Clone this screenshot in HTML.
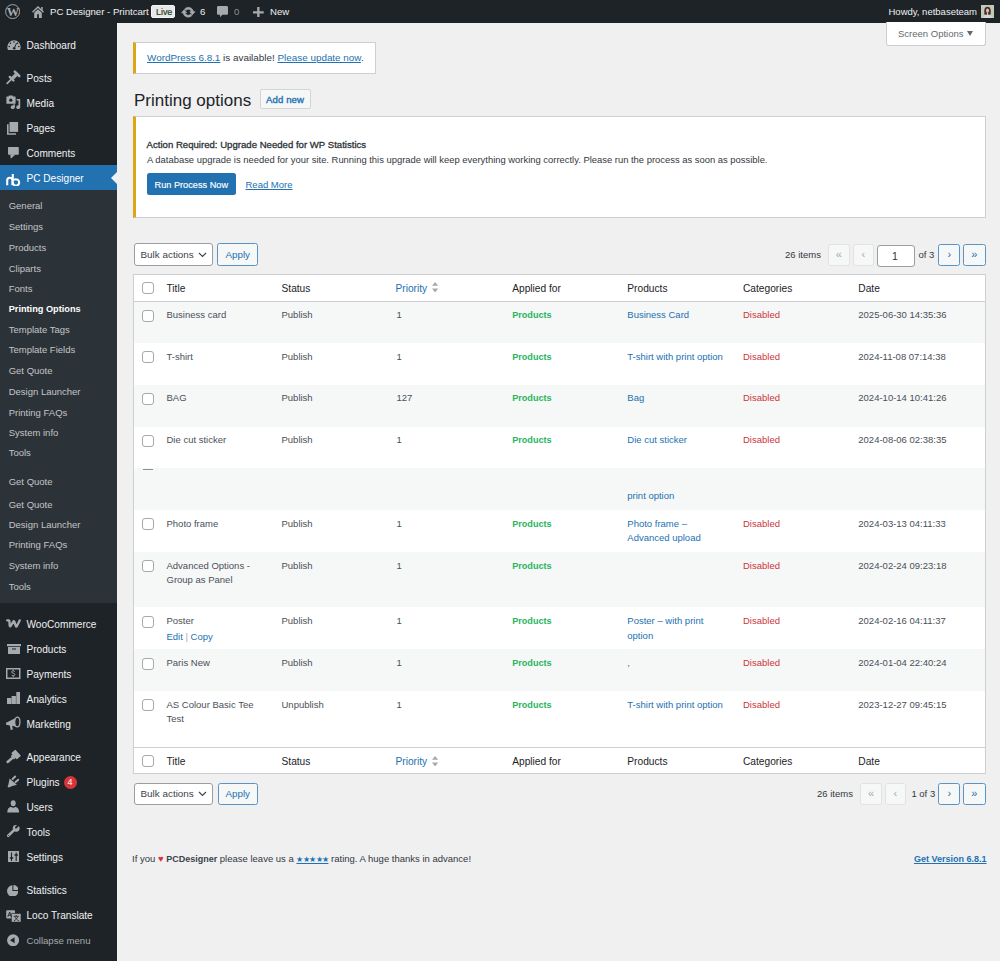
<!DOCTYPE html>
<html><head><meta charset="utf-8">
<style>
*{margin:0;padding:0;box-sizing:border-box}
html,body{width:1000px;height:961px;overflow:hidden;background:#f0f0f1;font-family:"Liberation Sans",sans-serif;}
#root{position:relative;width:1000px;height:961px;overflow:hidden}
.a{position:absolute}
.t{position:absolute;white-space:nowrap;line-height:14px;font-size:9.5px;color:#32383e}
#bar{left:0;top:0;width:1000px;height:23px;background:#1d2327}
#bar .t{color:#f0f0f1;font-size:9.6px}
#side{left:0;top:23px;width:117px;height:938px;background:#1d2327}
.m{position:absolute;margin-top:1px;left:26.5px;white-space:nowrap;line-height:14px;font-size:10.1px;color:#f0f0f1}
.s{position:absolute;left:8.7px;white-space:nowrap;line-height:14px;font-size:9.5px;color:#c3c4c7}
.ic{position:absolute;left:5px;width:16px;height:16px}
.link{color:#2271b1}
.tb .t:not(.lk):not(.g):not(.r){color:#4a5057}
.hd{color:#1d2327;font-size:10.2px}
.g{color:#27b55e;font-weight:bold;font-size:9.1px}
.r{color:#cc3538}
.lk{color:#2271b1}
.cb{position:absolute;left:142px;width:12px;height:12px;border:1px solid #a5a8ac;border-radius:3px;background:#fff}
.btn{position:absolute;border:1px solid #5b93c4;border-radius:2.5px;background:#f6f7f7;color:#2271b1}
.pg{position:absolute;height:22px;width:21.5px;border-radius:2.5px;font-size:11px;line-height:18.5px;text-align:center}
.pg.dis{border:1px solid #e2e2e4;background:#f6f7f7;color:#a7aaad}
.pg.en{border:1px solid #5b93c4;background:#f6f7f7;color:#2271b1}
</style></head>
<body><div id="root">

<!-- admin bar -->
<div id="bar" class="a">
  <svg class="a" style="left:4.8px;top:4.1px" width="15.2" height="15.2" viewBox="0 0 20 20"><circle cx="10" cy="10" r="9.2" fill="none" stroke="#a7aaad" stroke-width="1.3"/><text x="10" y="16.2" font-family="Liberation Serif" font-weight="bold" font-size="16.5" fill="#a7aaad" text-anchor="middle" letter-spacing="-1.2">W</text></svg>
  <svg class="a" style="left:32px;top:5.5px" width="12" height="12" viewBox="0 0 12 12"><path d="M.5 6.2L6 1l5.5 5.2" fill="none" stroke="#a7aaad" stroke-width="1.4"/><rect x="9.2" y="1" width="1.5" height="3.5" fill="#a7aaad"/><path d="M2.2 6.8L6 3.2l3.8 3.6V12H2.2z" fill="#a7aaad"/><rect x="5.1" y="8.2" width="1.8" height="3.8" fill="#1d2327"/></svg>
  <div class="t" style="left:50px;top:4.5px">PC Designer - Printcart</div>
  <div class="a" style="left:151.2px;top:5px;width:24.3px;height:13px;background:#e8e8e8;border:1px solid #f4f4f4;border-radius:2px"></div>
  <div class="t" style="left:156px;top:4.7px;color:#1f3d1f;font-size:8.9px;-webkit-text-stroke:.2px #1f3d1f">Live</div>
  <svg class="a" style="left:181px;top:4.5px" width="14.5" height="14.5" viewBox="0 0 20 20"><path d="M10.2 3.28c3.53 0 6.43 2.61 6.92 6h2.08l-3.5 4-3.5-4h2.32c-.45-1.97-2.21-3.45-4.32-3.45-1.45 0-2.730.71-3.54 1.78L4.950 5.66C6.23 4.2 8.11 3.28 10.2 3.28zm-.4 13.44c-3.52 0-6.43-2.61-6.92-6H.8l3.5-4c1.17 1.33 2.33 2.67 3.5 4H5.48c.45 1.97 2.21 3.45 4.32 3.45 1.45 0 2.73-.71 3.54-1.78l1.71 1.95c-1.28 1.46-3.15 2.38-5.25 2.38z" fill="#a7aaad" stroke="#a7aaad" stroke-width="1"/></svg>
  <div class="t" style="left:200px;top:4.5px">6</div>
  <svg class="a" style="left:217.3px;top:6.3px" width="11" height="11.5" viewBox="0 0 11 11.5"><path d="M1.3 0h8.4C10.4 0 11 .6 11 1.3v6.2c0 .7-.6 1.3-1.3 1.3H5.3L3 11.3V8.8H1.3C.6 8.8 0 8.2 0 7.5V1.3C0 .6.6 0 1.3 0z" fill="#a7aaad"/></svg>
  <div class="t" style="left:234px;top:4.5px;color:#8c8f94 !important">0</div>
  <svg class="a" style="left:253.3px;top:6.6px" width="10.7" height="10.7" viewBox="0 0 20 20"><path d="M7.8 0h4.4v7.8H20v4.4h-7.8V20H7.8v-7.8H0V7.8h7.8z" fill="#a7aaad"/></svg>
  <div class="t" style="left:270px;top:4.5px">New</div>
  <div class="t" style="left:888.5px;top:4.5px;font-size:9.5px">Howdy, netbaseteam</div>
  <svg class="a" style="left:981px;top:5px" width="13" height="13" viewBox="0 0 13 13"><rect width="13" height="13" fill="#c3c8b4"/><path d="M2 13c.5-2.5 2-3.5 4.5-3.5S10.5 10.5 11 13z" fill="#d4d6d8"/><path d="M6.5 1.8c-2 0-3.2 1.5-3.2 3.6v3.8c.8.6 1.6.7 2.4.5l.5-2.5h.6l.5 2.5c.8.2 1.6.1 2.4-.5V5.4c0-2.1-1.2-3.6-3.2-3.6z" fill="#4a2c30"/><ellipse cx="6.5" cy="5.6" rx="1.5" ry="2.2" fill="#d9c4b6"/></svg>
</div>

<!-- sidebar -->
<div id="side" class="a"></div>
<div class="a" style="left:0;top:165px;width:117px;height:25px;background:#2271b1"></div>
<div class="a" style="left:0;top:190px;width:117px;height:413px;background:#2c3338"></div>

<div class="m" style="top:37.5px">Dashboard</div>
<div class="m" style="top:70.5px">Posts</div>
<div class="m" style="top:95.5px">Media</div>
<div class="m" style="top:121px">Pages</div>
<div class="m" style="top:146px">Comments</div>
<div class="m" style="top:171px;color:#fff">PC Designer</div>

<div class="s" style="top:199px">General</div>
<div class="s" style="top:220px">Settings</div>
<div class="s" style="top:240.5px">Products</div>
<div class="s" style="top:261.5px">Cliparts</div>
<div class="s" style="top:281.5px">Fonts</div>
<div class="s" style="top:302px;color:#fff;font-size:9.2px;font-weight:bold">Printing Options</div>
<div class="s" style="top:323px">Template Tags</div>
<div class="s" style="top:343px">Template Fields</div>
<div class="s" style="top:364px">Get Quote</div>
<div class="s" style="top:384.5px">Design Launcher</div>
<div class="s" style="top:405.5px">Printing FAQs</div>
<div class="s" style="top:426px">System info</div>
<div class="s" style="top:446px">Tools</div>
<div class="s" style="top:475px">Get Quote</div>
<div class="s" style="top:497.5px">Get Quote</div>
<div class="s" style="top:518px">Design Launcher</div>
<div class="s" style="top:538px">Printing FAQs</div>
<div class="s" style="top:559px">System info</div>
<div class="s" style="top:580px">Tools</div>

<div class="m" style="top:616.5px">WooCommerce</div>
<div class="m" style="top:641.5px">Products</div>
<div class="m" style="top:666.5px">Payments</div>
<div class="m" style="top:691.5px">Analytics</div>
<div class="m" style="top:716.5px">Marketing</div>
<div class="m" style="top:750px">Appearance</div>
<div class="m" style="top:775px">Plugins</div>
<div class="a" style="left:63.5px;top:775.5px;width:13px;height:13px;border-radius:50%;background:#d63638;color:#fff;font-size:9px;line-height:13px;text-align:center">4</div>
<div class="m" style="top:800px">Users</div>
<div class="m" style="top:825px">Tools</div>
<div class="m" style="top:850px">Settings</div>
<div class="m" style="top:883px">Statistics</div>
<div class="m" style="top:908px">Loco Translate</div>
<div class="m" style="top:933px;color:#a7aaad;font-size:9.6px">Collapse menu</div>


<!-- sidebar icons -->
<svg class="a" style="left:6.5px;top:39.5px" width="14" height="10" viewBox="0 0 14 10"><path d="M7 0.3A6.7 6.7 0 0 0 0.3 7c0 1.1.3 2.1.7 3h12c.4-.9.7-1.9.7-3A6.7 6.7 0 0 0 7 .3z" fill="#a7aaad"/><circle cx="7" cy="2" r=".8" fill="#1d2327"/><circle cx="3.5" cy="3.3" r=".8" fill="#1d2327"/><circle cx="10.5" cy="3.3" r=".8" fill="#1d2327"/><circle cx="2.2" cy="6.5" r=".8" fill="#1d2327"/><circle cx="11.8" cy="6.5" r=".8" fill="#1d2327"/><path d="M9.5 3.2L7.6 7.6" stroke="#1d2327" stroke-width="1"/><circle cx="7.2" cy="8.2" r="1.3" fill="#1d2327"/></svg>
<svg class="a" style="left:4px;top:68px" width="20" height="18" viewBox="0 0 20 18"><g stroke="#a7aaad" fill="none"><path d="M10.8 3.6l4.4 4.4" stroke-width="2.6" stroke-linecap="round"/><path d="M12.6 6.2l-4 4" stroke-width="3.4"/><path d="M5.8 8.9l3.6 3.6" stroke-width="2.4" stroke-linecap="round"/><path d="M7.4 11.2L3.2 15.4" stroke-width="1.7" stroke-linecap="round"/></g></svg>
<svg class="a" style="left:4px;top:94px" width="20" height="18" viewBox="0 0 20 18"><rect x="2.4" y="2.4" width="9.2" height="7.4" rx=".4" fill="#a7aaad"/><rect x="4.6" y="1.6" width="4.4" height="1.4" rx=".5" fill="#a7aaad"/><circle cx="6.8" cy="6.2" r="1.6" fill="#1d2327"/><path d="M12.6 5h3.6v8.2h-1.7V6.6h-1.9z" fill="#a7aaad"/><circle cx="8.7" cy="13.2" r="1.9" fill="#a7aaad"/><circle cx="14.2" cy="13.2" r="1.9" fill="#a7aaad"/><rect x="9.4" y="10.3" width="1.5" height="3" fill="#a7aaad"/></svg>
<svg class="a" style="left:7.2px;top:121.8px" width="12" height="13" viewBox="0 0 12 13"><path d="M2.5 0h8.6v9.9H2.5z" fill="#a7aaad"/><path d="M1.6 2.2v9h7.4v1.6H0V2.2z" fill="#a7aaad"/></svg>
<svg class="a" style="left:7.7px;top:147px" width="11" height="12" viewBox="0 0 11 12"><rect x="0" y="0" width="10.8" height="7.8" rx=".7" fill="#a7aaad"/><path d="M2.2 7.4l.6 4.4 4.6-4.4z" fill="#a7aaad"/></svg>
<svg class="a" style="left:5.8px;top:173.5px" width="15" height="12" viewBox="0 0 15 12"><path d="M1.2 11.3V6.3a2.6 2.6 0 0 1 5.2 0v5M6.8 0v8.5a3.2 3.2 0 1 0 3.2-3.2 3 3 0 0 0-2 .7" fill="none" stroke="#fff" stroke-width="2.1"/></svg>
<svg class="a" style="left:111px;top:172px" width="6" height="12" viewBox="0 0 6 12"><path d="M6 0L0 6l6 6z" fill="#f0f0f1"/></svg>

<svg class="a" style="left:6px;top:619px" width="15" height="9" viewBox="0 0 15 9"><path d="M1.2 1.4h1.6c.5 0 .6.3.6.8l.3 4.4c.1.9.6 1.1 1 .4l2.6-4.4c.4-.7.8-.6 1 .1l1.5 4.3c.3.8.8.8 1.1 0l2.8-5.6" fill="none" stroke="#a7aaad" stroke-width="2.3" stroke-linejoin="round" stroke-linecap="round"/></svg>
<svg class="a" style="left:6.5px;top:644px" width="14" height="10" viewBox="0 0 14 10"><path d="M0 0h14v2.3H0zM1 3h12v7H1z" fill="#a7aaad"/><path d="M5 4.5h4v1H5z" fill="#1d2327"/></svg>
<svg class="a" style="left:6px;top:668px" width="14.5" height="11" viewBox="0 0 14.5 11"><rect x=".75" y=".75" width="13" height="9.5" fill="none" stroke="#a7aaad" stroke-width="1.5"/><path d="M8.8 3.6c-.3-.5-.9-.8-1.6-.8-.9 0-1.6.5-1.6 1.2 0 1.5 3.3.9 3.3 2.5 0 .7-.7 1.3-1.7 1.3-.8 0-1.4-.3-1.7-.9M7.2 1.9v.9M7.2 7.8v1" fill="none" stroke="#a7aaad" stroke-width="1"/></svg>
<svg class="a" style="left:6.5px;top:692px" width="13.6" height="12" viewBox="0 0 13.6 12"><path d="M0 6h4.3v6H0zM4.6 4h4.3v8H4.6zM9.3 0h4.3v12H9.3z" fill="#a7aaad"/></svg>
<svg class="a" style="left:6px;top:716px" width="15" height="15" viewBox="0 0 15 15"><path d="M1.2 6.3L11 1.2v9.6L1.2 8.9A1.3 1.3 0 0 1 1.2 6.3z" fill="#a7aaad"/><path d="M3.6 8.6l1.1 5.4 2.2-.4-.9-4.6" fill="#a7aaad"/><ellipse cx="11.3" cy="6" rx="2.6" ry="4.9" fill="#1d2327" stroke="#a7aaad" stroke-width="1.3"/></svg>

<svg class="a" style="left:3px;top:748px" width="20" height="17" viewBox="0 0 20 17"><g transform="rotate(-42 12.5 7)"><rect x="10.5" y="2.8" width="5.5" height="8.4" rx=".6" fill="#a7aaad"/><rect x="8.3" y="4.6" width="2.6" height="4.8" fill="#a7aaad"/></g><path d="M9 10.2L4.6 14" stroke="#a7aaad" stroke-width="2.5" stroke-linecap="round"/></svg>
<svg class="a" style="left:3px;top:772px" width="20" height="20" viewBox="0 0 20 20"><path d="M6.6 6.6L13.9 12.7 8.6 14.3 6 15.6 4.6 15 5.5 12z" fill="#a7aaad"/><path d="M9.6 6.9l2.6-2.3M12.6 10l2.6-2.3" stroke="#a7aaad" stroke-width="2" stroke-linecap="round"/></svg>
<svg class="a" style="left:3px;top:798px" width="20" height="16" viewBox="0 0 20 16"><ellipse cx="10.2" cy="5.3" rx="2.5" ry="3" fill="#a7aaad"/><path d="M4.3 14.6C4.3 11 5.6 9.4 8 8.8c.7.6 1.4.9 2.2.9s1.5-.3 2.2-.9c2.4.6 3.7 2.2 3.7 5.8z" fill="#a7aaad"/></svg>
<svg class="a" style="left:3px;top:822px" width="20" height="18" viewBox="0 0 20 18"><path d="M5.2 13.8L11.6 7.6" stroke="#a7aaad" stroke-width="2.6" stroke-linecap="round"/><circle cx="13.2" cy="6.3" r="3.4" fill="#a7aaad"/><path d="M13 5.5l2.8-2.7" stroke="#1d2327" stroke-width="2" stroke-linecap="round"/><circle cx="5.6" cy="13.4" r=".5" fill="#1d2327"/></svg>
<svg class="a" style="left:7.8px;top:850.6px" width="11.7" height="11.5" viewBox="0 0 11.7 11.5"><rect width="11.7" height="11.5" fill="#a7aaad"/><path d="M3.5 1.5v8.5M8.2 1.5v8.5" stroke="#1d2327" stroke-width="1.1"/><path d="M1.8 7h3.4M6.5 4h3.4" stroke="#1d2327" stroke-width="1.3"/></svg>

<svg class="a" style="left:6.8px;top:884.8px" width="11.7" height="11.5" viewBox="0 0 11.7 11.5"><path d="M5.4.3v5.6h6a5.7 5.7 0 1 1-6-5.6z" fill="#a7aaad"/><path d="M6.4 0A5.3 5.3 0 0 1 11.7 4.9H6.4z" fill="#a7aaad"/></svg>
<svg class="a" style="left:5.5px;top:909.6px" width="15.5" height="12.5" viewBox="0 0 15.5 12.5"><rect x=".2" y=".2" width="8.8" height="8.4" rx=".8" fill="#a7aaad"/><rect x="5.3" y="3.4" width="9.8" height="8.8" rx=".8" fill="#a7aaad" stroke="#1d2327" stroke-width=".7"/><path d="M1.8 6.8l1.9-4.8 1.6 4.8M2.4 5.2h2.4" stroke="#1d2327" stroke-width=".9" fill="none"/><path d="M7.6 6.3h5.2M10.2 5.2v1.1M8 10.8c1.8-1 3.2-2.4 3.7-4.3M9.2 7.2c.7 1.6 2 2.9 3.7 3.6" stroke="#1d2327" stroke-width=".85" fill="none"/></svg>
<svg class="a" style="left:7.1px;top:933.8px" width="12.2" height="12.5" viewBox="0 0 12.2 12.5"><circle cx="6.1" cy="6.25" r="6" fill="#a7aaad"/><path d="M3 6.25l4.6-3v6z" fill="#1d2327"/></svg>

<!-- content -->
<!-- screen options -->
<div class="a" style="left:886px;top:22px;width:99.5px;height:23.5px;background:#fff;border:1px solid #cdcfd2;border-top:none;border-radius:0 0 3px 3px"></div>
<div class="t" style="left:898px;top:27px;color:#646970">Screen Options</div>
<svg class="a" style="left:967px;top:31px" width="6" height="5" viewBox="0 0 6 5"><path d="M0 0h6L3 5z" fill="#646970"/></svg>

<!-- update nag -->
<div class="a" style="left:133px;top:41.5px;width:243px;height:32px;background:#fff;border:1px solid #cdcfd2;border-left:3px solid #dba617"></div>
<div class="t" style="left:147px;top:51px;font-size:9.9px"><span class="lk" style="text-decoration:underline">WordPress 6.8.1</span> is available! <span class="lk" style="text-decoration:underline">Please update now</span>.</div>

<div class="t" style="left:134px;top:89.5px;font-size:17px;line-height:22px;color:#1d2327">Printing options</div>
<div class="btn" style="left:260px;top:89px;width:51px;height:19.5px;border-color:#d3d4d6;border-radius:2px"></div>
<div class="t" style="left:266px;top:92.8px;color:#2271b1;font-size:9.6px;-webkit-text-stroke:.35px #2271b1;letter-spacing:.1px">Add new</div>

<!-- action required -->
<div class="a" style="left:133px;top:115.5px;width:852.5px;height:102px;background:#fff;border:1px solid #cdcfd2;border-left:3px solid #dba617"></div>
<div class="t" style="left:146.6px;top:138px;font-size:9.6px;color:#2c3338;-webkit-text-stroke:.3px #2c3338">Action Required: Upgrade Needed for WP Statistics</div>
<div class="t" style="left:147px;top:153px;font-size:9.42px">A database upgrade is needed for your site. Running this upgrade will keep everything working correctly. Please run the process as soon as possible.</div>
<div class="a" style="left:146.5px;top:173.2px;width:89px;height:21.8px;background:#2271b1;border-radius:2.5px"></div>
<div class="t" style="left:154.5px;top:177.5px;color:#fff;font-size:9.2px;-webkit-text-stroke:.15px #fff">Run Process Now</div>
<div class="t" style="left:245.5px;top:177.5px;color:#2271b1;text-decoration:underline">Read More</div>

<!-- top tablenav -->
<div class="a" style="left:134px;top:243px;width:79px;height:22.5px;background:#fff;border:1px solid #9a9da1;border-radius:3px"></div>
<div class="t" style="left:140.5px;top:248px;color:#3c434a;font-size:9.9px">Bulk actions</div>
<svg class="a" style="left:198px;top:251.5px" width="9" height="6" viewBox="0 0 9 6"><path d="M1 1l3.5 3.5L8 1" fill="none" stroke="#3c434a" stroke-width="1.1"/></svg>
<div class="btn" style="left:217px;top:243px;width:41px;height:22.5px"></div>
<div class="t" style="left:225.5px;top:248px;color:#2271b1;font-size:9.8px">Apply</div>

<div class="t" style="left:785px;top:248px">26 items</div>
<div class="pg dis" style="left:828px;top:244px">«</div>
<div class="pg dis" style="left:852.5px;top:244px">‹</div>
<div class="a" style="left:877px;top:245px;width:37.5px;height:21.5px;background:#fff;border:1px solid #9a9da1;border-radius:3px"></div>
<div class="t" style="left:892px;top:248.5px;color:#2c3338;font-size:10.5px">1</div>
<div class="t" style="left:918.5px;top:248px">of 3</div>
<div class="pg en" style="left:938.3px;top:244px;width:22.2px">›</div>
<div class="pg en" style="left:963px;top:244px;width:22.5px">»</div>

<!-- table -->
<div class="a" style="left:133px;top:273.5px;width:852.5px;height:500.5px;background:#fff;border:1px solid #cdcfd2"></div>
<div class="a" style="left:134px;top:300.5px;width:850.5px;height:1px;background:#cdcfd2"></div>
<div class="a" style="left:134px;top:301.5px;width:850.5px;height:41.5px;background:#f6f7f7"></div>
<div class="a" style="left:134px;top:384.7px;width:850.5px;height:41.9px;background:#f6f7f7"></div>
<div class="a" style="left:134px;top:468.3px;width:850.5px;height:41.7px;background:#f6f7f7"></div>
<div class="a" style="left:134px;top:552px;width:850.5px;height:55px;background:#f6f7f7"></div>
<div class="a" style="left:134px;top:649.3px;width:850.5px;height:41.7px;background:#f6f7f7"></div>
<div class="a" style="left:134px;top:747px;width:850.5px;height:1px;background:#cdcfd2"></div>

<!-- header -->
<div class="cb" style="top:282px"></div>
<div class="t hd" style="left:166.5px;top:281.6px">Title</div>
<div class="t hd" style="left:281.5px;top:281.6px">Status</div>
<div class="t lk" style="left:395.5px;top:281.6px;font-size:10.2px">Priority</div>
<svg class="a" style="left:431.8px;top:282px" width="6.2" height="10.6" viewBox="0 0 6.2 10.6"><path d="M3.1 0L6.2 3.8H0zM3.1 10.6L0 6.4h6.2z" fill="#a7aaad"/></svg>
<div class="t hd" style="left:512.2px;top:281.6px">Applied for</div>
<div class="t hd" style="left:627.3px;top:281.6px">Products</div>
<div class="t hd" style="left:743px;top:281.6px">Categories</div>
<div class="t hd" style="left:858.3px;top:281.6px">Date</div>

<div class="tb">
<!-- row 1 -->
<div class="cb" style="top:309.5px"></div>
<div class="t" style="left:166.5px;top:308px">Business card</div>
<div class="t" style="left:281.5px;top:308px">Publish</div>
<div class="t" style="left:396.5px;top:308px">1</div>
<div class="t g" style="left:512.2px;top:308px">Products</div>
<div class="t lk" style="left:627.3px;top:308px">Business Card</div>
<div class="t r" style="left:743px;top:308px">Disabled</div>
<div class="t" style="left:858.3px;top:308px">2025-06-30 14:35:36</div>

<!-- row 2 -->
<div class="cb" style="top:351px"></div>
<div class="t" style="left:166.5px;top:349.7px">T-shirt</div>
<div class="t" style="left:281.5px;top:349.7px">Publish</div>
<div class="t" style="left:396.5px;top:349.7px">1</div>
<div class="t g" style="left:512.2px;top:349.7px">Products</div>
<div class="t lk" style="left:627.3px;top:349.7px">T-shirt with print option</div>
<div class="t r" style="left:743px;top:349.7px">Disabled</div>
<div class="t" style="left:858.3px;top:349.7px">2024-11-08 07:14:38</div>

<!-- row 3 -->
<div class="cb" style="top:392.7px"></div>
<div class="t" style="left:166.5px;top:391.4px">BAG</div>
<div class="t" style="left:281.5px;top:391.4px">Publish</div>
<div class="t" style="left:396.5px;top:391.4px">127</div>
<div class="t g" style="left:512.2px;top:391.4px">Products</div>
<div class="t lk" style="left:627.3px;top:391.4px">Bag</div>
<div class="t r" style="left:743px;top:391.4px">Disabled</div>
<div class="t" style="left:858.3px;top:391.4px">2024-10-14 10:41:26</div>

<!-- row 4 -->
<div class="cb" style="top:434.5px"></div>
<div class="t" style="left:166.5px;top:433.2px">Die cut sticker</div>
<div class="t" style="left:281.5px;top:433.2px">Publish</div>
<div class="t" style="left:396.5px;top:433.2px">1</div>
<div class="t g" style="left:512.2px;top:433.2px">Products</div>
<div class="t lk" style="left:627.3px;top:433.2px">Die cut sticker</div>
<div class="t r" style="left:743px;top:433.2px">Disabled</div>
<div class="t" style="left:858.3px;top:433.2px">2024-08-06 02:38:35</div>

<!-- row 5 (clipped) -->
<div class="a" style="left:143px;top:469px;width:10px;height:1px;background:#8c8f94"></div>
<div class="t lk" style="left:627.3px;top:488.5px">print option</div>

<!-- row 6 -->
<div class="cb" style="top:518px"></div>
<div class="t" style="left:166.5px;top:516.7px">Photo frame</div>
<div class="t" style="left:281.5px;top:516.7px">Publish</div>
<div class="t" style="left:396.5px;top:516.7px">1</div>
<div class="t g" style="left:512.2px;top:516.7px">Products</div>
<div class="t lk" style="left:627.3px;top:516.7px">Photo frame –</div>
<div class="t lk" style="left:627.3px;top:530.5px">Advanced upload</div>
<div class="t r" style="left:743px;top:516.7px">Disabled</div>
<div class="t" style="left:858.3px;top:516.7px">2024-03-13 04:11:33</div>

<!-- row 7 -->
<div class="cb" style="top:560px"></div>
<div class="t" style="left:166.5px;top:558.5px">Advanced Options -</div>
<div class="t" style="left:166.5px;top:572.5px">Group as Panel</div>
<div class="t" style="left:281.5px;top:558.5px">Publish</div>
<div class="t" style="left:396.5px;top:558.5px">1</div>
<div class="t g" style="left:512.2px;top:558.5px">Products</div>
<div class="t r" style="left:743px;top:558.5px">Disabled</div>
<div class="t" style="left:858.3px;top:558.5px">2024-02-24 09:23:18</div>

<!-- row 8 -->
<div class="cb" style="top:615.5px"></div>
<div class="t" style="left:166.5px;top:614px">Poster</div>
<div class="t lk" style="left:166.5px;top:629.5px">Edit <span style="color:#a7aaad">|</span> Copy</div>
<div class="t" style="left:281.5px;top:614px">Publish</div>
<div class="t" style="left:396.5px;top:614px">1</div>
<div class="t g" style="left:512.2px;top:614px">Products</div>
<div class="t lk" style="left:627.3px;top:614px">Poster – with print</div>
<div class="t lk" style="left:627.3px;top:628.5px">option</div>
<div class="t r" style="left:743px;top:614px">Disabled</div>
<div class="t" style="left:858.3px;top:614px">2024-02-16 04:11:37</div>

<!-- row 9 -->
<div class="cb" style="top:657.5px"></div>
<div class="t" style="left:166.5px;top:656px">Paris New</div>
<div class="t" style="left:281.5px;top:656px">Publish</div>
<div class="t" style="left:396.5px;top:656px">1</div>
<div class="t g" style="left:512.2px;top:656px">Products</div>
<div class="t lk" style="left:627.3px;top:656px">,</div>
<div class="t r" style="left:743px;top:656px">Disabled</div>
<div class="t" style="left:858.3px;top:656px">2024-01-04 22:40:24</div>

<!-- row 10 -->
<div class="cb" style="top:699px"></div>
<div class="t" style="left:166.5px;top:697.5px">AS Colour Basic Tee</div>
<div class="t" style="left:166.5px;top:711.7px">Test</div>
<div class="t" style="left:281.5px;top:697.5px">Unpublish</div>
<div class="t" style="left:396.5px;top:697.5px">1</div>
<div class="t g" style="left:512.2px;top:697.5px">Products</div>
<div class="t lk" style="left:627.3px;top:697.5px">T-shirt with print option</div>
<div class="t r" style="left:743px;top:697.5px">Disabled</div>
<div class="t" style="left:858.3px;top:697.5px">2023-12-27 09:45:15</div>

</div>
<!-- footer header -->
<div class="cb" style="top:755px"></div>
<div class="t hd" style="left:166.5px;top:755px">Title</div>
<div class="t hd" style="left:281.5px;top:755px">Status</div>
<div class="t lk" style="left:395.5px;top:755px;font-size:10.2px">Priority</div>
<svg class="a" style="left:431.8px;top:755.5px" width="6.2" height="10.6" viewBox="0 0 6.2 10.6"><path d="M3.1 0L6.2 3.8H0zM3.1 10.6L0 6.4h6.2z" fill="#a7aaad"/></svg>
<div class="t hd" style="left:512.2px;top:755px">Applied for</div>
<div class="t hd" style="left:627.3px;top:755px">Products</div>
<div class="t hd" style="left:743px;top:755px">Categories</div>
<div class="t hd" style="left:858.3px;top:755px">Date</div>

<!-- bottom tablenav -->
<div class="a" style="left:134px;top:782.5px;width:79px;height:22.5px;background:#fff;border:1px solid #9a9da1;border-radius:3px"></div>
<div class="t" style="left:140.5px;top:787px;color:#3c434a;font-size:9.9px">Bulk actions</div>
<svg class="a" style="left:198px;top:790.5px" width="9" height="6" viewBox="0 0 9 6"><path d="M1 1l3.5 3.5L8 1" fill="none" stroke="#3c434a" stroke-width="1.1"/></svg>
<div class="btn" style="left:217.5px;top:782.5px;width:40px;height:22.5px"></div>
<div class="t" style="left:225.5px;top:787px;color:#2271b1;font-size:9.8px">Apply</div>

<div class="t" style="left:817px;top:786.5px">26 items</div>
<div class="pg dis" style="left:860.3px;top:782.5px">«</div>
<div class="pg dis" style="left:884.5px;top:782.5px">‹</div>
<div class="t" style="left:911.4px;top:786.5px">1 of 3</div>
<div class="pg en" style="left:938.3px;top:782.5px;width:22.2px">›</div>
<div class="pg en" style="left:963px;top:782.5px;width:22.5px">»</div>

<!-- footer -->
<div class="t" style="left:132px;top:851.5px">If you <span style="color:#d63638">♥</span> <b style="color:#3c434a;font-size:9px">PCDesigner</b> please leave us a <span class="lk" style="text-decoration:underline;font-size:8.2px;letter-spacing:-0.6px">★★★★★</span> rating. A huge thanks in advance!</div>
<div class="t lk" style="left:914px;top:851.5px;font-weight:bold;font-size:9px;text-decoration:underline">Get Version 6.8.1</div>

</div></body></html>
